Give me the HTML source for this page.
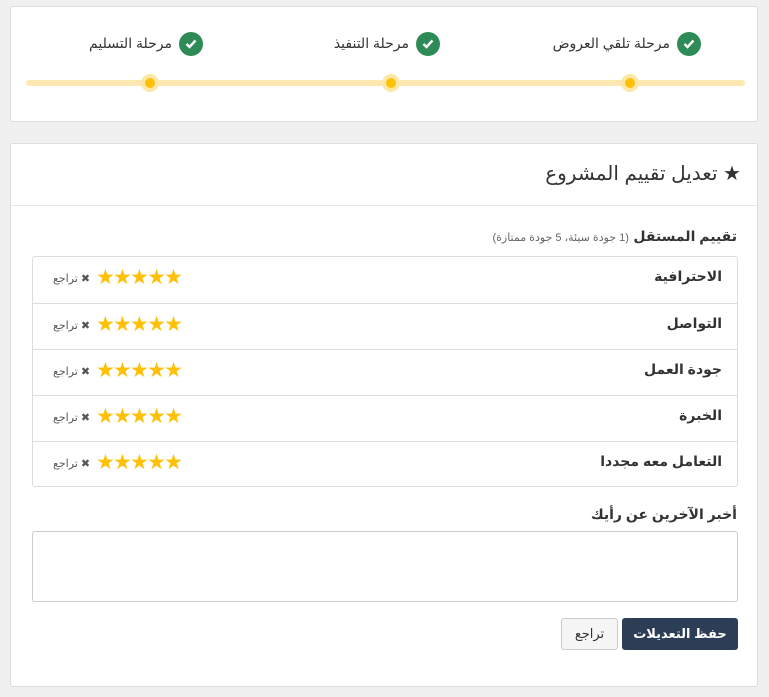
<!DOCTYPE html>
<html><head><meta charset="utf-8"><style>
*{box-sizing:border-box;margin:0;padding:0}
body{width:769px;height:697px;background:#f0f0f0;font-family:"Liberation Sans","DejaVu Sans",sans-serif;position:relative;overflow:hidden;color:#333}
.card{position:absolute;left:10px;width:748px;background:#fff;border:1px solid #ddd;border-radius:3px}
.abs{position:absolute}
.lbl{position:absolute;font-size:14px;color:#333;direction:rtl;white-space:nowrap;top:28px}
.chk{position:absolute;width:24px;height:24px;border-radius:50%;background:#2e8b57;top:25px}
.chk svg{position:absolute;left:6px;top:7px}
.dot{position:absolute;width:18px;height:18px;border-radius:50%;background:#fde8a8;top:67px}
.dot i{position:absolute;left:4px;top:4px;width:10px;height:10px;border-radius:50%;background:#ffc107}
.row{position:absolute;left:0;width:705px;height:46px;border-top:1px solid #ddd}
.row:first-child{border-top:none}
.rn{position:absolute;right:16px;top:11px;font-size:14px;font-weight:bold;direction:rtl;color:#333}
.stars{position:absolute;left:63px;top:11px;color:#ffc107;font-size:21px;letter-spacing:-1.8px;line-height:20px}
.undo{position:absolute;left:20px;top:15px;font-size:11px;color:#555;direction:rtl}
</style></head><body>
<div class="card" style="top:6px;height:116px">
  <div class="abs" style="left:15px;top:73px;width:719px;height:6px;background:#fce8b0;border-radius:3px"></div>
  <div class="dot" style="left:130px"><i></i></div>
  <div class="dot" style="left:371px"><i></i></div>
  <div class="dot" style="left:610px"><i></i></div>
  <div class="chk" style="left:168px"><svg width="12" height="10" viewBox="0 0 12 10"><path d="M1.5 5l3 3 6-6.5" stroke="#fff" stroke-width="2.4" fill="none"/></svg></div>
  <div class="chk" style="left:405px"><svg width="12" height="10" viewBox="0 0 12 10"><path d="M1.5 5l3 3 6-6.5" stroke="#fff" stroke-width="2.4" fill="none"/></svg></div>
  <div class="chk" style="left:666px"><svg width="12" height="10" viewBox="0 0 12 10"><path d="M1.5 5l3 3 6-6.5" stroke="#fff" stroke-width="2.4" fill="none"/></svg></div>
  <div class="lbl" style="right:585px">مرحلة التسليم</div>
  <div class="lbl" style="right:348px">مرحلة التنفيذ</div>
  <div class="lbl" style="right:87px">مرحلة تلقي العروض</div>
</div>
<div class="card" style="top:143px;height:544px">
  <div class="abs" style="left:0;top:0;width:746px;height:62px;border-bottom:1px solid #e5e5e5"></div>
  <div class="abs" style="right:16px;top:17px;font-size:20px;direction:rtl;color:#333;white-space:nowrap">★ تعديل تقييم المشروع</div>
  <div class="abs" style="right:20px;top:84px;direction:rtl;white-space:nowrap"><b style="font-size:14px">تقييم المستقل</b> <span style="font-size:11px;color:#666">(1 جودة سيئة، 5 جودة ممتازة)</span></div>
  <div class="abs" style="left:21px;top:112px;width:706px;height:231px;border:1px solid #ddd;border-radius:3px">
    <div class="row" style="top:0"><div class="rn">الاحترافية</div><div class="stars">★★★★★</div><div class="undo">✖ تراجع</div></div>
    <div class="row" style="top:46px"><div class="rn">التواصل</div><div class="stars">★★★★★</div><div class="undo">✖ تراجع</div></div>
    <div class="row" style="top:92px"><div class="rn">جودة العمل</div><div class="stars">★★★★★</div><div class="undo">✖ تراجع</div></div>
    <div class="row" style="top:138px"><div class="rn">الخبرة</div><div class="stars">★★★★★</div><div class="undo">✖ تراجع</div></div>
    <div class="row" style="top:184px"><div class="rn">التعامل معه مجددا</div><div class="stars">★★★★★</div><div class="undo">✖ تراجع</div></div>
  </div>
  <div class="abs" style="right:20px;top:362px;font-size:14px;font-weight:bold;direction:rtl">أخبر الآخرين عن رأيك</div>
  <div class="abs" style="left:21px;top:387px;width:706px;height:71px;border:1px solid #ccc;border-radius:3px"></div>
  <div class="abs" style="left:611px;top:474px;width:116px;height:32px;background:#2c3e55;border-radius:3px;color:#fff;font-size:13px;font-weight:bold;text-align:center;line-height:32px">حفظ التعديلات</div>
  <div class="abs" style="left:550px;top:474px;width:57px;height:32px;background:#f5f5f5;border:1px solid #ccc;border-radius:3px;color:#333;font-size:13px;text-align:center;line-height:30px">تراجع</div>
</div>
</body></html>
